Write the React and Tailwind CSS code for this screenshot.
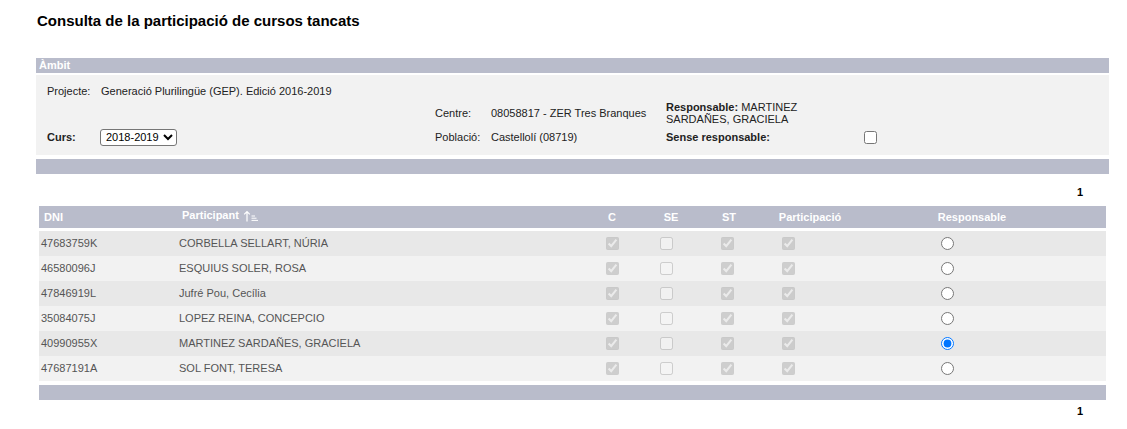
import React from 'react';

const rows = [
  { dni: '47683759K', name: 'CORBELLA SELLART, NÚRIA', resp: false },
  { dni: '46580096J', name: 'ESQUIUS SOLER, ROSA', resp: false },
  { dni: '47846919L', name: 'Jufré Pou, Cecília', resp: false },
  { dni: '35084075J', name: 'LOPEZ REINA, CONCEPCIO', resp: false },
  { dni: '40990955X', name: 'MARTINEZ SARDAÑES, GRACIELA', resp: true },
  { dni: '47687191A', name: 'SOL FONT, TERESA', resp: false },
];

const SortIcon = () => (
  <svg width="16" height="12" viewBox="0 0 16 12" className="inline-block ml-[4px]">
    <path d="M4 11.5V1.5M1.2 4.3L4 1.5l2.8 2.8" stroke="white" strokeWidth="1.2" fill="none" />
    <path d="M8.5 6h3.5M8.5 8.2h5M8.5 10.4h6.5" stroke="white" strokeWidth="1" fill="none" />
  </svg>
);

const App = () => {
  return (
    <div className="min-h-[429px] bg-white font-['Liberation_Sans',Arial,sans-serif] text-[11px]">
      <div className="ml-[36px] w-[1073px] pt-[12px]">
        <h1 className="ml-[1px] text-[15px] leading-[18px] font-bold text-black">
          Consulta de la participació de cursos tancats
        </h1>

        {/* Ambit */}
        <div className="mt-[28px] h-[15px] bg-[#b9bccb] pl-[3px] text-white font-bold leading-[14px]">
          Àmbit
        </div>
        <div className="mt-[2px] h-[80px] bg-[#f2f2f2] pt-[7px] text-[#222]">
          <div className="grid grid-cols-[399px_230px_1fr] grid-rows-[18px_26px_22px]">
            <div className="col-span-3 flex items-center pl-[11px]">
              <span className="w-[54px]">Projecte:</span>
              <span>Generació Plurilingüe (GEP). Edició 2016-2019</span>
            </div>
            <div></div>
            <div className="flex items-center">
              <span className="w-[56px]">Centre:</span>
              <span>08058817 - ZER Tres Branques</span>
            </div>
            <div className="flex items-center pl-[1px]">
              <div className="w-[150px] leading-[12px]">
                <span className="font-bold">Responsable:</span> MARTINEZ SARDAÑES, GRACIELA
              </div>
            </div>
            <div className="flex items-center pl-[11px]">
              <span className="w-[53px] font-bold">Curs:</span>
              <select
                defaultValue="2018-2019"
                className="h-[17px] w-[77px] rounded-[3px] border border-[#767676] bg-white pl-[1px] text-[11px] text-black"
              >
                <option>2017-2018</option>
                <option>2018-2019</option>
              </select>
            </div>
            <div className="flex items-center">
              <span className="w-[56px]">Població:</span>
              <span>Castellolí (08719)</span>
            </div>
            <div className="flex items-center pl-[1px]">
              <span className="w-[198px] font-bold">Sense responsable:</span>
              <input type="checkbox" className="m-0 h-[13px] w-[13px]" />
            </div>
          </div>
        </div>
        <div className="mt-[4px] h-[15px] bg-[#b9bccb]"></div>

        <div className="h-[32px] pt-[12px] pr-[26px] text-right font-bold leading-[13px] text-black">1</div>

        {/* Table */}
        <div className="ml-[3px] w-[1067px]">
          <div className="grid h-[22px] grid-cols-[138px_406px_58px_60px_56px_106px_218px_1fr] items-center bg-[#b9bccb] font-bold text-white">
            <div className="pl-[5px]">DNI</div>
            <div className="-mt-[3px] flex items-center pl-[5px]">
              Participant
              <SortIcon />
            </div>
            <div className="text-center">C</div>
            <div className="text-center">SE</div>
            <div className="text-center">ST</div>
            <div className="text-center">Participació</div>
            <div className="text-center">Responsable</div>
            <div></div>
          </div>
          <div className="mt-[3px]">
            {rows.map((r, i) => (
              <div
                key={r.dni}
                className={`grid h-[25px] grid-cols-[138px_406px_58px_60px_56px_106px_218px_1fr] items-center text-[#555] ${i % 2 === 0 ? 'bg-[#e8e8e8]' : 'bg-[#f2f2f2]'}`}
              >
                <div className="pl-[2px]">{r.dni}</div>
                <div className="pl-[2px]">{r.name}</div>
                <div className="flex pl-[23px]">
                  <input type="checkbox" disabled defaultChecked className="m-0 h-[13px] w-[13px]" />
                </div>
                <div className="flex pl-[19px]">
                  <input type="checkbox" disabled className="m-0 h-[13px] w-[13px]" />
                </div>
                <div className="flex pl-[20px]">
                  <input type="checkbox" disabled defaultChecked className="m-0 h-[13px] w-[13px]" />
                </div>
                <div className="flex pl-[25px]">
                  <input type="checkbox" disabled defaultChecked className="m-0 h-[13px] w-[13px]" />
                </div>
                <div className="flex pl-[78px]">
                  <input type="radio" name="responsable" defaultChecked={r.resp} className="m-0 h-[13px] w-[13px]" />
                </div>
                <div></div>
              </div>
            ))}
          </div>
          <div className="mt-[4px] h-[15px] bg-[#b9bccb]"></div>
        </div>

        <div className="flex h-[22px] items-center justify-end pr-[26px] font-bold text-black">1</div>
      </div>
    </div>
  );
};

export default App;
